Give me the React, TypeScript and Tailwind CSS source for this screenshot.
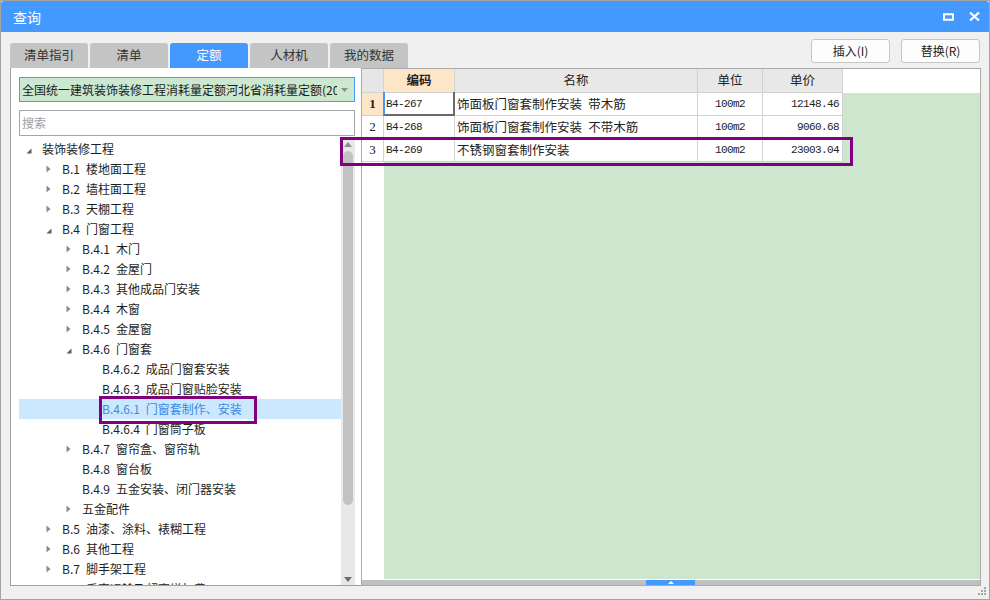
import React from 'react';

type TreeNode = {
  level: number;
  text: string;
  state: 'open' | 'closed' | 'none';
  selected?: boolean;
};

const tree: TreeNode[] = [
  { level: 0, text: '装饰装修工程', state: 'open' },
  { level: 1, text: 'B.1 楼地面工程', state: 'closed' },
  { level: 1, text: 'B.2 墙柱面工程', state: 'closed' },
  { level: 1, text: 'B.3 天棚工程', state: 'closed' },
  { level: 1, text: 'B.4 门窗工程', state: 'open' },
  { level: 2, text: 'B.4.1 木门', state: 'closed' },
  { level: 2, text: 'B.4.2 金屋门', state: 'closed' },
  { level: 2, text: 'B.4.3 其他成品门安装', state: 'closed' },
  { level: 2, text: 'B.4.4 木窗', state: 'closed' },
  { level: 2, text: 'B.4.5 金屋窗', state: 'closed' },
  { level: 2, text: 'B.4.6 门窗套', state: 'open' },
  { level: 3, text: 'B.4.6.2 成品门窗套安装', state: 'none' },
  { level: 3, text: 'B.4.6.3 成品门窗贴脸安装', state: 'none' },
  { level: 3, text: 'B.4.6.1 门窗套制作、安装', state: 'none', selected: true },
  { level: 3, text: 'B.4.6.4 门窗筒子板', state: 'none' },
  { level: 2, text: 'B.4.7 窗帘盒、窗帘轨', state: 'closed' },
  { level: 2, text: 'B.4.8 窗台板', state: 'none' },
  { level: 2, text: 'B.4.9 五金安装、闭门器安装', state: 'none' },
  { level: 2, text: '五金配件', state: 'closed' },
  { level: 1, text: 'B.5 油漆、涂料、裱糊工程', state: 'closed' },
  { level: 1, text: 'B.6 其他工程', state: 'closed' },
  { level: 1, text: 'B.7 脚手架工程', state: 'closed' },
  { level: 1, text: 'B.8 垂直运输及超高增加费', state: 'closed' },
];

const indent = ['pl-0', 'pl-[20px]', 'pl-[40px]', 'pl-[60px]'];

const rows = [
  { n: '1', code: 'B4-267', name: '饰面板门窗套制作安装\u2002带木筋', unit: '100m2', price: '12148.46' },
  { n: '2', code: 'B4-268', name: '饰面板门窗套制作安装\u2002不带木筋', unit: '100m2', price: '9060.68' },
  { n: '3', code: 'B4-269', name: '不锈钢窗套制作安装', unit: '100m2', price: '23003.04' },
];

const tabs = ['清单指引', '清单', '定额', '人材机', '我的数据'];

const mono = "font-[family-name:'Liberation_Mono',monospace] text-[11px] tracking-[-0.6px]";

const TreeRow: React.FC<{ node: TreeNode }> = ({ node }) => (
  <div
    className={`h-[20px] shrink-0 flex items-center ${indent[node.level]} ${
      node.selected ? 'bg-[#cce8ff] text-[#3a8ae4]' : 'text-[#1e1e1e]'
    }`}
  >
    <div className="w-[23px] h-[20px] shrink-0 flex items-center pl-[7px]">
      {node.state === 'closed' && (
        <svg width="5" height="8" viewBox="0 0 5 8">
          <path d="M0.5 0.5 L4.5 4 L0.5 7.5 Z" fill="#8a8a8a" />
        </svg>
      )}
      {node.state === 'open' && (
        <svg width="6" height="6" viewBox="0 0 6 6" className="mt-[3px]">
          <path d="M5.5 0.5 L5.5 5.5 L0.5 5.5 Z" fill="#5c5c5c" />
        </svg>
      )}
    </div>
    <span className="text-[12px] leading-[20px] whitespace-nowrap">{node.text.replace(' ', '\u2002')}</span>
  </div>
);

export default function App() {
  return (
    <div className="relative w-[990px] h-[600px] border border-[#a3a3a3] bg-[#f0f0f0] flex flex-col overflow-hidden font-[family-name:'Noto_Sans_CJK_SC',sans-serif] text-[#222]">
      {/* title bar */}
      <div className="h-[31px] shrink-0 bg-[#4499ff] rounded-t-[3px] flex items-center pl-[12px] pr-[9px] text-white">
        <span className="text-[14px] leading-none">查询</span>
        <div className="ml-auto flex items-center gap-[15px]">
          <svg width="11" height="8" viewBox="0 0 11 8">
            <rect x="1" y="1.25" width="9" height="5.5" fill="none" stroke="#fff" strokeWidth="2" />
          </svg>
          <svg width="11" height="9" viewBox="0 0 11 9">
            <path d="M1 0.5 L10 8.5 M10 0.5 L1 8.5" stroke="#fff" strokeWidth="2.2" />
          </svg>
        </div>
      </div>

      <div className="flex-1 flex pl-[9px] pr-[8px]">
        {/* left column */}
        <div className="w-[351px] shrink-0 flex flex-col pt-[11px]">
          <div className="h-[25px] w-[398px] flex gap-[2px]">
            {tabs.map((t) => (
              <div
                key={t}
                className={`w-[78px] shrink-0 h-[25px] rounded-t-[3px] flex items-center justify-center text-[12.5px] ${
                  t === '定额' ? 'bg-[#4499ff] text-white' : 'bg-[#c4c4c4] text-[#333]'
                }`}
              >
                {t}
              </div>
            ))}
          </div>

          <div className="h-[518px] bg-white border-l border-b border-[#a0a0a0] flex flex-col">
            <div className="pl-[8px] pt-[9px] flex flex-col gap-[8px]">
              <div className="w-[336px] h-[25px] bg-[#cde8d0] border border-[#4a9cff] flex items-center pl-[2px] pr-[6px]">
                <span className="flex-1 overflow-hidden whitespace-nowrap text-[12px] text-[#1a1a1a]">
                  全国统一建筑装饰装修工程消耗量定额河北省消耗量定额(2012)
                </span>
                <svg width="7" height="4" viewBox="0 0 7 4" className="ml-[4px]">
                  <path d="M0 0 L7 0 L3.5 4 Z" fill="#8c8c8c" />
                </svg>
              </div>
              <div className="w-[336px] h-[26px] bg-white border border-[#a6a6a6] flex items-center pl-[2px]">
                <span className="text-[12px] text-[#a0a0a0]">搜索</span>
              </div>
            </div>

            <div className="mt-[1px] flex-1 flex min-h-0 pl-[8px]">
              <div className="w-[322px] shrink-0 overflow-hidden flex flex-col pt-[2px]">
                {tree.map((n) => (
                  <TreeRow key={n.text} node={n} />
                ))}
              </div>
              {/* vertical scrollbar */}
              <div className="w-[14px] bg-[#e8e8e8] flex flex-col items-center">
                <svg width="8" height="5" viewBox="0 0 8 5" className="mt-[5px]">
                  <path d="M4 0 L8 5 L0 5 Z" fill="#8c8c8c" />
                </svg>
                <div className="mt-[4px] w-[10px] h-[354px] rounded-[5px] bg-[#c2c2c2]" />
                <div className="flex-1" />
                <svg width="8" height="5" viewBox="0 0 8 5" className="mb-[3px]">
                  <path d="M0 0 L8 0 L4 5 Z" fill="#6e6e6e" />
                </svg>
              </div>
            </div>
          </div>
        </div>

        {/* right column */}
        <div className="flex-1 flex flex-col pt-[7px]">
          <div className="h-[24px] flex justify-end gap-[11px] mb-[5px] pr-[1px]">
            <button className="w-[79px] h-[24px] bg-[#fdfdfd] border border-[#c6c6c6] rounded-[3px] text-[12px] text-[#222]">
              插入(I)
            </button>
            <button className="w-[79px] h-[24px] bg-[#fdfdfd] border border-[#c6c6c6] rounded-[3px] text-[12px] text-[#222]">
              替换(R)
            </button>
          </div>

          <div className="h-[518px] bg-white border border-[#ababab] flex flex-col">
            {/* header */}
            <div className="h-[24px] shrink-0 flex text-[12.5px]">
              <div className="w-[22px] bg-[#e6e6e6] border-r border-b border-[#d2d2d2]" />
              <div className="w-[71px] bg-[#fde5c8] border-r border-b border-[#d2d2d2] flex items-center justify-center font-bold">
                编码
              </div>
              <div className="w-[243px] bg-[#e8e8e8] border-r border-b border-[#d2d2d2] flex items-center justify-center">
                名称
              </div>
              <div className="w-[65px] bg-[#e8e8e8] border-r border-b border-[#d2d2d2] flex items-center justify-center">
                单位
              </div>
              <div className="w-[80px] bg-[#e8e8e8] border-r border-b border-[#d2d2d2] flex items-center justify-center">
                单价
              </div>
              <div className="flex-1 bg-white" />
            </div>

            {/* body */}
            <div className="flex-1 flex min-h-0">
              <div className="w-[22px] shrink-0 flex flex-col bg-white">
                {rows.map((r, i) => (
                  <div
                    key={r.n}
                    className={`h-[23px] border-r border-b border-[#d2d2d2] flex items-center justify-center font-[family-name:'Liberation_Serif',serif] text-[13px] ${
                      i === 0 ? 'bg-[#fde5c8] font-bold' : 'bg-white'
                    }`}
                  >
                    {r.n}
                  </div>
                ))}
              </div>
              <div className="flex-1 bg-[#cde7cf] flex flex-col">
                {rows.map((r, i) => (
                  <div key={r.code} className="h-[23px] shrink-0 flex">
                    <div className="relative w-[71px] bg-white border-r border-b border-[#d2d2d2] flex items-center pl-[2px]">
                      <span className={mono}>{r.code}</span>
                      {i === 0 && (
                        <div className="absolute inset-[-1px_-1px_-1px_-1px] border-l-2 border-l-[#4499ff] border-r-2 border-r-[#6a6a6a] border-b-2 border-b-[#6a6a6a]" />
                      )}
                    </div>
                    <div className="w-[243px] bg-white border-r border-b border-[#d2d2d2] flex items-center pl-[2px]">
                      <span className="text-[12.5px] whitespace-nowrap">{r.name}</span>
                    </div>
                    <div className="w-[65px] bg-white border-r border-b border-[#d2d2d2] flex items-center justify-center">
                      <span className={mono}>{r.unit}</span>
                    </div>
                    <div className="w-[80px] bg-white border-r border-b border-[#d2d2d2] flex items-center justify-end pr-[3px]">
                      <span className={mono}>{r.price}</span>
                    </div>
                  </div>
                ))}
              </div>
            </div>

            {/* horizontal scrollbar */}
            <div className="h-[1px] bg-white shrink-0" />
            <div className="h-[5px] shrink-0 bg-[#c0c0c0] flex">
              <div className="w-[284px]" />
              <div className="w-[49px] bg-[#4499ff] flex items-center justify-center">
                <svg width="6" height="3" viewBox="0 0 6 3">
                  <path d="M3 0 L6 3 L0 3 Z" fill="#fff" />
                </svg>
              </div>
            </div>
          </div>
        </div>
      </div>

      {/* resize grip */}
      <svg width="9" height="9" viewBox="0 0 9 9" className="absolute right-[2px] bottom-[3px]">
        <rect x="6" y="0" width="2" height="2" fill="#a8a8a8" />
        <rect x="3" y="3" width="2" height="2" fill="#a8a8a8" />
        <rect x="6" y="3" width="2" height="2" fill="#a8a8a8" />
        <rect x="0" y="6" width="2" height="2" fill="#a8a8a8" />
        <rect x="3" y="6" width="2" height="2" fill="#a8a8a8" />
        <rect x="6" y="6" width="2" height="2" fill="#a8a8a8" />
      </svg>

      {/* annotation boxes */}
      <div className="absolute left-[339px] top-[136px] w-[513px] h-[29px] border-[3px] border-[#800080]" />
      <div className="absolute left-[98px] top-[395px] w-[158px] h-[28px] border-[3px] border-[#800080]" />
    </div>
  );
}
